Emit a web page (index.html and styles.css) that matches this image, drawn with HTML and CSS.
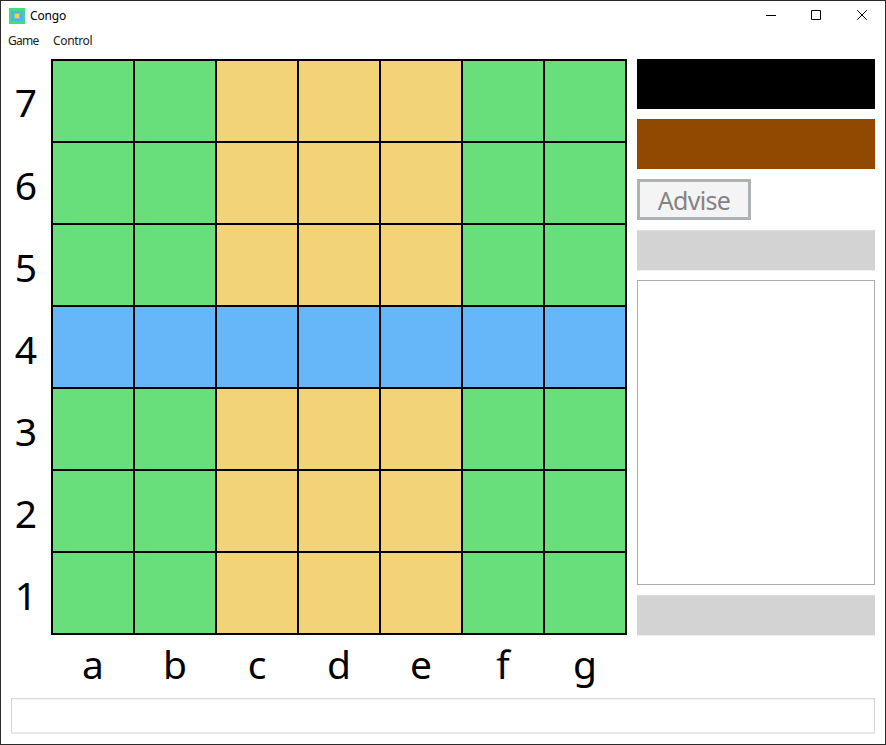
FILE: index.html
```
<!DOCTYPE html>
<html lang="en">
<head>
<meta charset="utf-8">
<title>Congo</title>
<link rel="stylesheet" href="styles.css">
</head>
<body>
<div class="window">
  <header class="titlebar">
    <svg class="logo" width="16" height="16" viewBox="0 0 16 16" shape-rendering="crispEdges"><path fill="#44dd7c" d="M0 0h16v16H0z"/><path fill="#4ab4f0" d="M2 3h12v10H2z"/><path fill="#88bfae" d="M5 5h6v6H5z"/><path fill="#f2d250" d="M6 6h4v4H6z"/></svg>
    <span class="title">Congo</span>
    <div class="controls">
      <svg width="46" height="29" viewBox="0 0 46 29"><path d="M18 14.5h10" stroke="#000"/></svg>
      <svg width="46" height="29" viewBox="0 0 46 29"><path d="M17.500 9.500h9v9h-9z" fill="none" stroke="#000"/></svg>
      <svg width="46" height="29" viewBox="0 0 46 29"><path d="M17.200 9.200l9.600 9.600M26.800 9.200l-9.600 9.600" stroke="#000"/></svg>
    </div>
  </header>
  <nav class="menu"><span class="game">Game</span><span class="control">Control</span></nav>
  <main class="content">
    <div class="ranks"><span class="top">7</span><span>6</span><span>5</span><span>4</span><span>3</span><span>2</span><span>1</span></div>
    <div class="middle">
      <div class="board">
        <i></i><i></i><i class="sand"></i><i class="sand"></i><i class="sand"></i><i></i><i></i>
        <i></i><i></i><i class="sand"></i><i class="sand"></i><i class="sand"></i><i></i><i></i>
        <i></i><i></i><i class="sand"></i><i class="sand"></i><i class="sand"></i><i></i><i></i>
        <i class="river"></i><i class="river"></i><i class="river"></i><i class="river"></i><i class="river"></i><i class="river"></i><i class="river"></i>
        <i></i><i></i><i class="sand"></i><i class="sand"></i><i class="sand"></i><i></i><i></i>
        <i></i><i></i><i class="sand"></i><i class="sand"></i><i class="sand"></i><i></i><i></i>
        <i></i><i></i><i class="sand"></i><i class="sand"></i><i class="sand"></i><i></i><i></i>
      </div>
      <div class="files"><span>a</span><span>b</span><span>c</span><span>d</span><span>e</span><span>f</span><span>g</span></div>
    </div>
    <aside class="side">
      <div class="player black"></div>
      <div class="player brown"></div>
      <button class="advise" disabled><span>Advise</span></button>
      <div class="readout"></div>
      <div class="moves"></div>
      <div class="readout"></div>
    </aside>
  </main>
  <div class="status"></div>
</div>
</body>
</html>
```
FILE: styles.css
```
* { box-sizing: border-box; }
body { margin: 0; background: #fff; font-family: "Noto Sans", sans-serif; color: #000; overflow: hidden; }
.window { width: 886px; height: 745px; border: 1px solid #2b2b2b; display: flex; flex-direction: column; }
.titlebar { height: 29px; display: flex; align-items: center; padding-left: 8px; }
.logo { display: block; }
.title { font-size: 12px; line-height: 16px; margin-left: 5px; letter-spacing: -0.15px; }
.controls { margin-left: auto; margin-right: -1px; display: flex; }
.controls svg { display: block; }
.menu { height: 20px; display: flex; padding-left: 7px; font-size: 12px; line-height: 22px; color: #212121; }
.game { width: 45px; letter-spacing: -0.7px; }
.control { letter-spacing: -0.35px; }
.content { display: flex; height: 639px; padding-top: 9px; }
.ranks { width: 50px; display: flex; flex-direction: column; padding-top: 1px; font-size: 39px; text-align: center; }
.ranks span { height: 82px; line-height: 86px; }
.ranks .top { line-height: 84px; }
.middle { width: 576px; }
.board { width: 576px; height: 576px; display: grid; grid-template-columns: repeat(7, 80px); grid-template-rows: repeat(7, 80px); gap: 2px; border: 2px solid #000; background: #000; }
.board i { background: #68df7a; }
.board .sand { background: #f2d377; }
.board .river { background: #65b7fa; }
.files { display: grid; grid-template-columns: repeat(7, 82px); padding-left: 1px; font-size: 39px; line-height: 58px; text-align: center; }
.side { width: 238px; height: 576px; margin-left: 10px; display: flex; flex-direction: column; gap: 10px; }
.player { height: 50px; }
.black { background: #000; }
.brown { background: #914800; }
.advise { width: 114px; height: 41px; padding: 0; border: 3px solid #adb2b5; background: #f4f4f4; color: #838383; font: 25px/35px "Noto Sans", sans-serif; letter-spacing: -0.7px; }
.advise span { display: block; line-height: 36px; }
.readout { height: 40px; background: #d3d3d3; border-top: 1px solid #dcdcdc; box-shadow: 0 1px #f0f0f0; }
.moves { height: 305px; border: 1px solid #abadb3; }
.status { width: 864px; height: 36px; margin-left: 10px; margin-top: 9px; border: 1px solid #d3d3d3; border-top-color: #dcdcdc; border-bottom: 2px solid #e9e9e9; box-shadow: inset 0 1px #f4f4f4; }
```
